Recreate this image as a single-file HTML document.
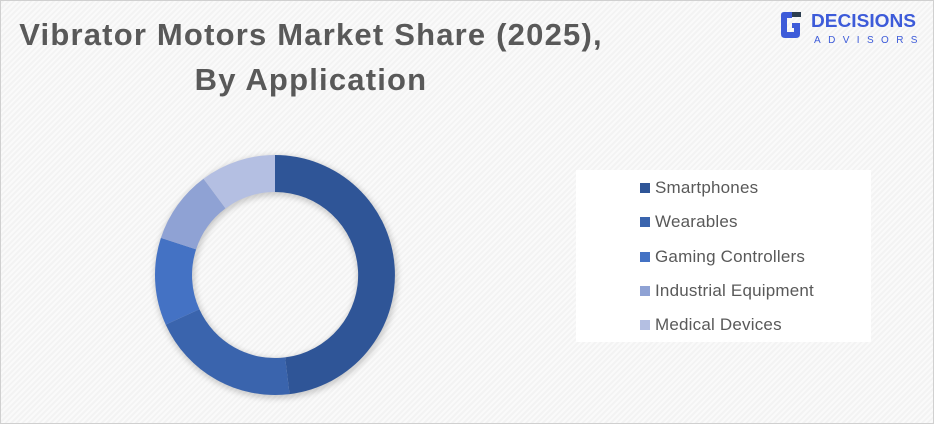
<!DOCTYPE html>
<html><head><meta charset="utf-8"><style>
html,body{margin:0;padding:0}
body{width:934px;height:424px;overflow:hidden;position:relative;font-family:"Liberation Sans",sans-serif;
background:#f3f3f3;background-image:repeating-linear-gradient(135deg,rgba(255,255,255,.6) 0 2px,rgba(0,0,0,0) 2px 4px);}
.frame{position:absolute;left:0;top:0;width:932px;height:422px;border:1px solid #d0d0d0}
.t{position:absolute;left:0;width:622px;text-align:center;color:#595959;font-weight:bold;font-size:31px;letter-spacing:1.2px;white-space:nowrap}
.legend{position:absolute;left:576px;top:170px;width:295px;height:172px;background:#fff}
.li{position:absolute;left:79px;font-size:17px;letter-spacing:0.2px;color:#595959;white-space:nowrap;line-height:20px}
.li i{position:absolute;left:-15px;top:5px;width:10px;height:10px}
</style></head><body>
<div class="frame"></div>
<div class="t" style="top:17px">Vibrator Motors Market Share (2025),</div>
<div class="t" style="top:62px">By Application</div>

<svg style="position:absolute;left:770px;top:6px" width="160" height="40" viewBox="0 0 160 40">
<path d="M22 6 H14 Q11 6 11 9 V28 Q11 32 15 32 H26 Q30 32 30 28 V17 H22 V22 H24 V26 H17 V12 H22 Z" fill="#3d5bd9"/>
<rect x="22" y="6" width="9" height="5" fill="#2c3e50"/>
<text x="41" y="21" font-family="Liberation Sans,sans-serif" font-weight="bold" font-size="18.5" fill="#3d5bd9" textLength="105" lengthAdjust="spacingAndGlyphs">DECISIONS</text>
<text x="44" y="37" font-family="Liberation Sans,sans-serif" font-size="10" fill="#3d5bd9" letter-spacing="7.4">ADVISORS</text>
</svg>

<svg style="position:absolute;left:0;top:0" width="560" height="424">
<defs><filter id="s" x="-20%" y="-20%" width="140%" height="140%"><feGaussianBlur stdDeviation="3"/></filter></defs>
<circle cx="276" cy="277" r="101.5" fill="none" stroke="#000" stroke-opacity=".18" stroke-width="40" filter="url(#s)"/>
<path d="M275 155 A120 120 0 0 1 289.6 394.1 L285.1 357.4 A83 83 0 0 0 275 192 Z" fill="#2f5597"/>
<path d="M289.6 394.1 A120 120 0 0 1 165.7 324.6 L199.4 309.3 A83 83 0 0 0 285.1 357.4 Z" fill="#3a64ad"/>
<path d="M165.7 324.6 A120 120 0 0 1 160.9 237.9 L196.1 249.4 A83 83 0 0 0 199.4 309.3 Z" fill="#4472c4"/>
<path d="M160.9 237.9 A120 120 0 0 1 203.5 178.7 L225.5 208.4 A83 83 0 0 0 196.1 249.4 Z" fill="#8fa2d4"/>
<path d="M203.5 178.7 A120 120 0 0 1 275 155 L275 192 A83 83 0 0 0 225.5 208.4 Z" fill="#b4bfe2"/>
</svg>

<div class="legend">
<div class="li" style="top:8px"><i style="background:#2f5597"></i>Smartphones</div>
<div class="li" style="top:42px"><i style="background:#3a64ad"></i>Wearables</div>
<div class="li" style="top:77px"><i style="background:#4472c4"></i>Gaming Controllers</div>
<div class="li" style="top:111px"><i style="background:#8fa2d4"></i>Industrial Equipment</div>
<div class="li" style="top:145px"><i style="background:#b4bfe2"></i>Medical Devices</div>
</div>
</body></html>
